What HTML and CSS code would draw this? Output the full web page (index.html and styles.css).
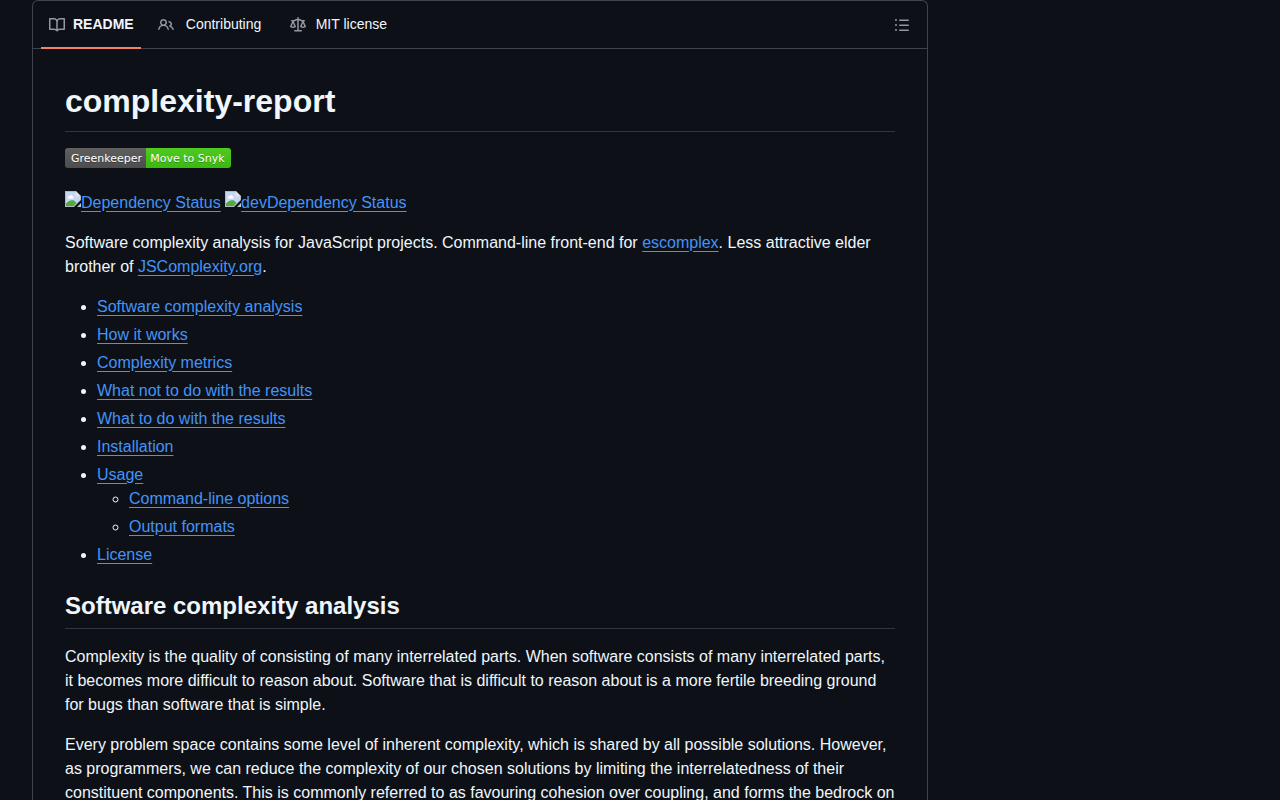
FILE: index.html
```html
<!DOCTYPE html>
<html lang="en">
<head>
<meta charset="utf-8">
<title>complexity-report</title>
<link rel="stylesheet" href="styles.css">
</head>
<body>
<svg width="0" height="0" class="defs">
  <symbol id="broken" viewBox="0 0 16 16">
    <path d="M0 0h11l5 5v4L9 16H0z" fill="#b4b8be"/>
    <path d="M1 1h9.500l4.500 4.500V9L8.500 15H1z" fill="#c6d6f5"/>
    <path d="M10.500 0v5.500H16z" fill="#e2e5e8"/>
    <path d="M3 6.500A1.500 1.500 0 0 1 4.500 5a2 2 0 0 1 3.500 1c1 0 1 1.500 0 1.500H4a1 1 0 0 1-1-1z" fill="#fff"/>
    <path d="M1 15v-2.500c2-2.500 5-4 8-3l2.500 2.500L8.500 15z" fill="#53a93f"/>
    <path d="M16 12v4h-4z" fill="#c3c8cf"/>
  </symbol>
</svg>
<main class="readme">
  <header class="tabs">
    <a class="tab tab-active"><svg class="icon" viewBox="0 0 16 16"><path d="M0 1.750A.75.75 0 0 1 .75 1h4.253c1.227 0 2.317.59 3 1.501A3.743 3.743 0 0 1 11.006 1h4.245a.75.75 0 0 1 .75.75v10.500a.75.75 0 0 1-.75.75h-4.507a2.250 2.250 0 0 0-1.591.659l-.622.621a.75.75 0 0 1-1.060 0l-.622-.621A2.250 2.250 0 0 0 5.258 13H.75a.75.75 0 0 1-.75-.75Zm7.251 10.324.004-5.073-.002-2.253A2.250 2.250 0 0 0 5.003 2.500H1.500v9h3.757a3.750 3.750 0 0 1 1.994.574ZM8.755 4.750l-.004 7.322a3.752 3.752 0 0 1 1.992-.572H14.500v-9h-3.495a2.250 2.250 0 0 0-2.250 2.250Z"/></svg><span>README</span></a>
    <a class="tab tab-contributing"><svg class="icon" viewBox="0 0 16 16"><path d="M2 5.500a3.500 3.500 0 1 1 5.898 2.549 5.508 5.508 0 0 1 3.034 4.084.75.75 0 1 1-1.482.235 4 4 0 0 0-7.900 0 .75.75 0 0 1-1.482-.236A5.507 5.507 0 0 1 3.102 8.050 3.493 3.493 0 0 1 2 5.500ZM11 4a3.001 3.001 0 0 1 2.220 5.018 5.010 5.010 0 0 1 2.560 3.012.749.749 0 0 1-.885.954.752.752 0 0 1-.549-.514 3.507 3.507 0 0 0-2.522-2.372.75.75 0 0 1-.574-.73v-.352a.75.75 0 0 1 .416-.672A1.500 1.500 0 0 0 11 5.500.75.75 0 0 1 11 4Zm-5.500-.5a2 2 0 1 0-.001 3.999A2 2 0 0 0 5.500 3.500Z"/></svg><span>Contributing</span></a>
    <a class="tab tab-license"><svg class="icon" viewBox="0 0 16 16"><path d="M8.750.75V2h.985c.304 0 .603.080.867.231l1.290.736c.038.022.080.033.124.033h2.234a.75.75 0 0 1 0 1.500h-.427l2.111 4.692a.75.75 0 0 1-.154.838l-.53-.53.529.531-.001.002-.002.002-.006.006-.006.005-.010.010-.045.040c-.21.176-.441.327-.686.450C14.556 10.780 13.880 11 13 11a4.498 4.498 0 0 1-2.023-.454 3.544 3.544 0 0 1-.686-.45l-.045-.040-.016-.015-.006-.006-.004-.004v-.001a.75.75 0 0 1-.154-.838L12.178 4.500h-.162c-.305 0-.604-.079-.868-.231l-1.290-.736a.245.245 0 0 0-.124-.033H8.750V13h2.500a.75.75 0 0 1 0 1.500h-6.500a.75.75 0 0 1 0-1.500h2.500V3.500h-.984a.245.245 0 0 0-.124.033l-1.289.737c-.265.150-.564.230-.869.230h-.162l2.112 4.692a.75.75 0 0 1-.154.838l-.53-.53.529.531-.001.002-.002.002-.006.006-.016.015-.045.040c-.21.176-.441.327-.686.450C4.556 10.780 3.880 11 3 11a4.498 4.498 0 0 1-2.023-.454 3.544 3.544 0 0 1-.686-.45l-.045-.040-.016-.015-.006-.006-.004-.004v-.001a.75.75 0 0 1-.154-.838L2.178 4.500H1.750a.75.75 0 0 1 0-1.500h2.234a.249.249 0 0 0 .125-.033l1.288-.737c.265-.15.564-.23.869-.23h.984V.75a.75.75 0 0 1 1.500 0Zm2.945 8.477c.285.135.718.273 1.305.273s1.020-.138 1.305-.273L13 6.327Zm-10 0c.285.135.718.273 1.305.273s1.020-.138 1.305-.273L3 6.327Z"/></svg><span>MIT license</span></a>
    <svg class="icon outline" viewBox="0 0 16 16"><path d="M5.750 2.500h8.500a.75.75 0 0 1 0 1.500h-8.500a.75.75 0 0 1 0-1.500Zm0 5h8.500a.75.75 0 0 1 0 1.500h-8.500a.75.75 0 0 1 0-1.500Zm0 5h8.500a.75.75 0 0 1 0 1.500h-8.500a.75.75 0 0 1 0-1.500ZM2 14a1 1 0 1 1 0-2 1 1 0 0 1 0 2Zm1-6a1 1 0 1 1-2 0 1 1 0 0 1 2 0ZM2 4a1 1 0 1 1 0-2 1 1 0 0 1 0 2Z"/></svg>
  </header>
  <article class="content">
    <h1>complexity-report</h1>
    <p><svg class="badge" width="166" height="20">
      <defs>
        <linearGradient id="shine" x2="0" y2="100%"><stop offset="0" stop-color="#bbb" stop-opacity=".1"/><stop offset="1" stop-opacity=".1"/></linearGradient>
        <clipPath id="round"><rect width="166" height="20" rx="3"/></clipPath>
      </defs>
      <g clip-path="url(#round)"><rect width="81" height="20" fill="#555"/><rect x="81" width="85" height="20" fill="#4c1"/><rect width="166" height="20" fill="url(#shine)"/></g>
      <g class="badge-text"><text x="41.500" y="14">Greenkeeper</text><text x="122.500" y="14">Move to Snyk</text></g>
    </svg></p>
    <p><svg class="broken"><use href="#broken"/></svg><a>Dependency Status</a> <svg class="broken"><use href="#broken"/></svg><a>devDependency Status</a></p>
    <p>Software complexity analysis for JavaScript projects. Command-line front-end for <a>escomplex</a>. Less attractive elder brother of <a>JSComplexity.org</a>.</p>
    <ul>
      <li><a>Software complexity analysis</a></li>
      <li><a>How it works</a></li>
      <li><a>Complexity metrics</a></li>
      <li><a>What not to do with the results</a></li>
      <li><a>What to do with the results</a></li>
      <li><a>Installation</a></li>
      <li><a>Usage</a>
        <ul>
          <li><a>Command-line options</a></li>
          <li><a>Output formats</a></li>
        </ul>
      </li>
      <li><a>License</a></li>
    </ul>
    <h2>Software complexity analysis</h2>
    <p>Complexity is the quality of consisting of many interrelated parts. When software consists of many interrelated parts, it becomes more difficult to reason about. Software that is difficult to reason about is a more fertile breeding ground for bugs than software that is simple.</p>
    <p>Every problem space contains some level of inherent complexity, which is shared by all possible solutions. However, as programmers, we can reduce the complexity of our chosen solutions by limiting the interrelatedness of their constituent components. This is commonly referred to as favouring cohesion over coupling, and forms the bedrock on</p>
  </article>
</main>
</body>
</html>
```

FILE: styles.css
```css
* { box-sizing: border-box; }
html { background: #0d1117; }
body {
  margin: 0;
  height: 800px;
  overflow: hidden;
  background: #0d1117;
  color: #f0f6fc;
  font: 16px/24px "Liberation Sans", Arial, sans-serif;
}
.defs { display: none; }
.readme {
  width: 896px;
  height: 800px;
  margin-left: 32px;
  border: 1px solid #3d444d;
  border-bottom: 0;
  border-radius: 6px 6px 0 0;
}
.tabs {
  display: flex;
  height: 48px;
  padding: 0 17px 0 8px;
  border-bottom: 1px solid #3d444d;
  font-size: 14px;
  line-height: 21px;
}
.icon { width: 16px; height: 16px; fill: #9198a1; flex: none; }
.tab {
  display: flex;
  align-items: center;
  gap: 8px;
  height: 48px;
  padding: 0 8px 1px;
}
.tab-active { width: 100px; font-weight: 600; box-shadow: inset 0 -2px #f78166; }
.tab-contributing { margin-left: 9px; gap: 11.8px; }
.tab-license { margin-left: 12.7px; gap: 9.700px; }
.outline { margin: 16px 0 0 auto; }
.content { padding: 32px 32px 0; }
h1, h2 {
  margin: 0 0 16px;
  font-weight: 600;
  line-height: 1.25;
  padding-bottom: .3em;
  border-bottom: 1px solid #3d444db3;
}
h1 { font-size: 32px; }
h2 { font-size: 24px; margin-top: 24px; }
p { margin: 0 0 16px; }
.content a { color: #4493f8; text-decoration: underline; text-underline-offset: .2rem; }
.content ul { margin: 0 0 16px; padding-left: 32px; }
.content ul ul { margin: 0; }
.content li + li { margin-top: 4px; }
.badge-text {
  fill: #fff;
  font-family: "DejaVu Sans", Verdana, sans-serif;
  font-size: 11px;
  text-anchor: middle;
  text-shadow: 0 1px 0 rgba(1, 1, 1, .3);
}
.broken { width: 16px; height: 16px; vertical-align: 1px; }
```
